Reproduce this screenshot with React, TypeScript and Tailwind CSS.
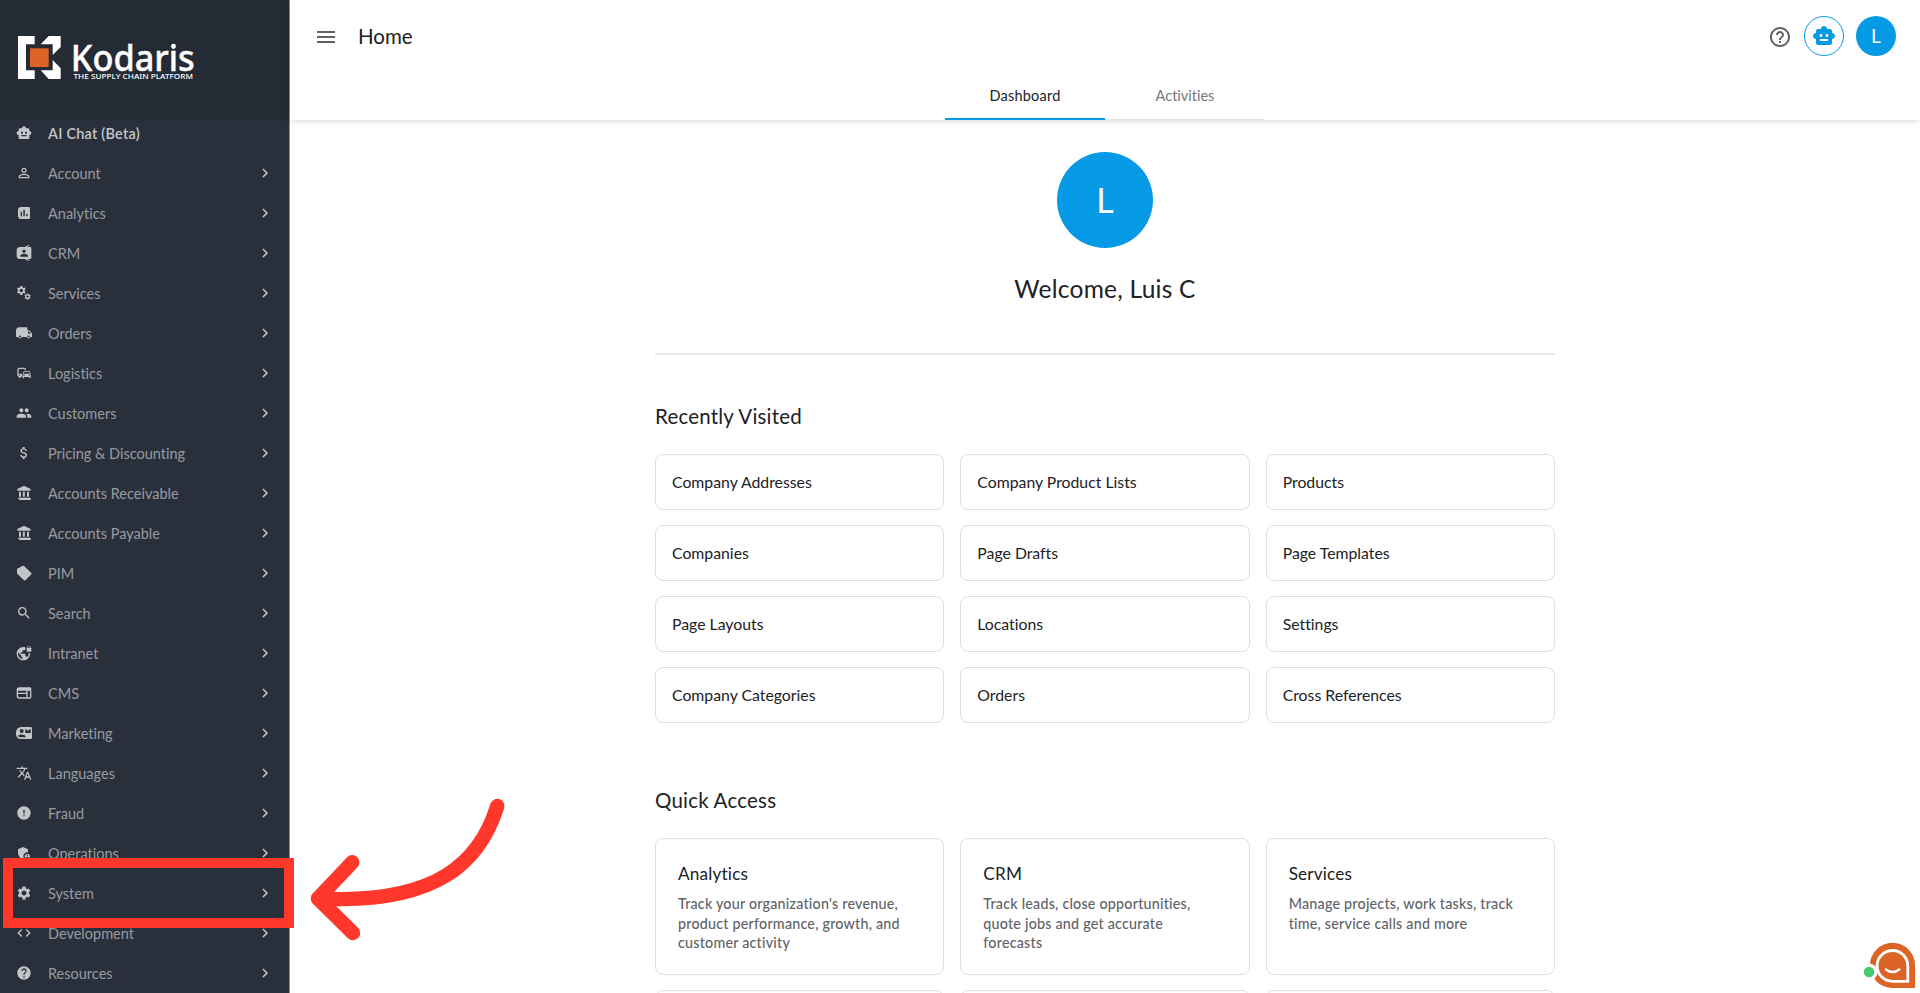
import type { ReactNode } from "react";
import {
  MdSmartToy,
  MdPersonOutline,
  MdCommute,
  MdGroup,
  MdAttachMoney,
  MdSearch,
  MdVpnLock,
  MdTranslate,
  MdError,
  MdAdminPanelSettings,
  MdSettings,
  MdCode,
  MdHelp,
  MdHelpOutline,
  MdChevronRight,
  MdMenu,
} from "react-icons/md";

type IconProps = { size?: number; className?: string };

function Glyph({ size = 16, className, children }: IconProps & { children: ReactNode }) {
  return (
    <svg width={size} height={size} viewBox="0 0 24 24" fill="currentColor" className={className}>
      {children}
    </svg>
  );
}

function ChartIcon(props: IconProps) {
  return (
    <Glyph {...props}>
      <path fillRule="evenodd" d="M8 3h11a2 2 0 0 1 2 2v14a2 2 0 0 1-2 2H8a5 5 0 0 1-5-5V8a5 5 0 0 1 5-5zM7 10v7h2v-7zM11 7v10h2.2V7zM15.4 13v4h2v-4z" />
    </Glyph>
  );
}

function ContactsIcon(props: IconProps) {
  return (
    <Glyph {...props}>
      <path fillRule="evenodd" d="M7 3h14a2 2 0 0 1 2 2v14a2 2 0 0 1-2 2H7a6 5 0 0 1-6-5V8a6 5 0 0 1 6-5zM12 6.7a2.6 2.6 0 1 0 0 5.2 2.6 2.6 0 0 0 0-5.2zM6.5 17.5h11.5V16c0-2-3.4-3-5.8-3s-5.7 1-5.7 3z" />
      <path d="M13 2.2L20 0v1.6l-4 1.4zM13 21.8l7 2.2v-1.6l-4-1.4z" />
    </Glyph>
  );
}

function GearsIcon({ size = 16, className }: IconProps) {
  return (
    <svg width={size} height={size} viewBox="0 0 16 16" className={className}>
      <MdSettings x={-0.2} y={0} size={11} />
      <MdSettings x={7.7} y={7.7} size={7.8} />
    </svg>
  );
}

function TruckIcon(props: IconProps) {
  return (
    <Glyph {...props}>
      <path fillRule="evenodd" d="M5 3.5h12V8h3l4 5v5h-2.3a3 3 0 0 1-5.8 0H8.6a3 3 0 0 1-5.8 0H0V9a5.5 5.5 0 0 1 5-5.5zM18 9.5V13h4l-2.7-3.5zM5.7 15.6a1.6 1.6 0 1 0 0 3.2 1.6 1.6 0 0 0 0-3.2zM18.8 15.6a1.6 1.6 0 1 0 0 3.2 1.6 1.6 0 0 0 0-3.2z" />
    </Glyph>
  );
}

function BankIcon(props: IconProps) {
  return (
    <Glyph {...props}>
      <path d="M12 1l10 5v2.5H2V6zM4.5 10h3v7.5h-3zM10.3 10h3v7.5h-3zM16.5 10h3v7.5h-3zM3 19h19v3.5H7A4.5 3.5 0 0 1 3 19z" />
    </Glyph>
  );
}

function TagIcon(props: IconProps) {
  return (
    <Glyph {...props}>
      <path d="M1.5 6.5A3.5 3.5 0 0 1 5 4l4-2.5a3 3 0 0 1 3.5.5l10 9.5a2 2 0 0 1 0 3l-8 8a2 2 0 0 1-3 0L2.3 13.5a3 3 0 0 1-.8-2z" />
    </Glyph>
  );
}

function LayoutIcon(props: IconProps) {
  return (
    <Glyph {...props}>
      <path fillRule="evenodd" d="M5 3.5h16a2 2 0 0 1 2 2v13a2 2 0 0 1-2 2H5a4 4 0 0 1-4-4v-9a4 4 0 0 1 4-4zM3 8.5v3.2h12.5V8.5zM3 13.5V16a2.5 2.5 0 0 0 2.5 2.5h10v-5zM17.5 8.5v10H21v-10z" />
    </Glyph>
  );
}

function ContactMailIcon(props: IconProps) {
  return (
    <Glyph {...props}>
      <path fillRule="evenodd" d="M8 3h14a2 2 0 0 1 2 2v14a2 2 0 0 1-2 2H7a7 7 0 0 1-7-7v-3a8 8 0 0 1 8-8zM8.5 6a3 3 0 1 0 0 6 3 3 0 0 0 0-6zM2.5 16.5c1 1.2 2.5 1.7 4.5 1.7h7.5v-1c0-2-4-3.1-6-3.1s-5 .9-6 2.4zM14 5.5V12h8V5.5l-4 3z" />
      <path d="M15.5 5.5h5L18 7.3z" />
    </Glyph>
  );
}

const menu = [
  { label: "Account", icon: MdPersonOutline },
  { label: "Analytics", icon: ChartIcon },
  { label: "CRM", icon: ContactsIcon },
  { label: "Services", icon: GearsIcon },
  { label: "Orders", icon: TruckIcon },
  { label: "Logistics", icon: MdCommute },
  { label: "Customers", icon: MdGroup },
  { label: "Pricing & Discounting", icon: MdAttachMoney },
  { label: "Accounts Receivable", icon: BankIcon },
  { label: "Accounts Payable", icon: BankIcon },
  { label: "PIM", icon: TagIcon },
  { label: "Search", icon: MdSearch },
  { label: "Intranet", icon: MdVpnLock },
  { label: "CMS", icon: LayoutIcon },
  { label: "Marketing", icon: ContactMailIcon },
  { label: "Languages", icon: MdTranslate },
  { label: "Fraud", icon: MdError },
  { label: "Operations", icon: MdAdminPanelSettings },
  { label: "System", icon: MdSettings },
  { label: "Development", icon: MdCode },
  { label: "Resources", icon: MdHelp },
];

const recent = [
  "Company Addresses",
  "Company Product Lists",
  "Products",
  "Companies",
  "Page Drafts",
  "Page Templates",
  "Page Layouts",
  "Locations",
  "Settings",
  "Company Categories",
  "Orders",
  "Cross References",
];

const quick = [
  { title: "Analytics", lines: ["Track your organization's revenue,", "product performance, growth, and", "customer activity"] },
  { title: "CRM", lines: ["Track leads, close opportunities,", "quote jobs and get accurate", "forecasts"] },
  { title: "Services", lines: ["Manage projects, work tasks, track", "time, service calls and more"] },
];

function Logo() {
  return (
    <svg width="190" height="70" viewBox="17 25 190 70">
      <path fill="#fff" d="M18 36h16.7v8.3H26v26h8.7V79H18z" />
      <path fill="#fff" d="M48.7 36H60.7V47l-8 8V44.3H40.7zM52.7 60l8 8.3V79h-12l-8-8.7h12z" />
      <path fill="#dc6427" d="M30 48.3h18.7v18.7H30z" />
      <text x="70.8" y="70.5" textLength="124" lengthAdjust="spacingAndGlyphs" fontSize="35.5" fontWeight="500" fill="#fff" stroke="#fff" strokeWidth="0.4" fontFamily="Noto Sans, sans-serif">
        Kodaris
      </text>
      <text x="73.5" y="78.7" textLength="119.5" lengthAdjust="spacingAndGlyphs" fontSize="7.6" fontWeight="500" fill="#fff" fontFamily="Noto Sans, sans-serif">
        THE SUPPLY CHAIN PLATFORM
      </text>
    </svg>
  );
}

function Sidebar() {
  return (
    <aside className="flex h-full w-[290px] shrink-0 flex-col border-r border-[#8d9095] bg-[#2a303b]">
      <div className="z-10 flex h-[120px] shrink-0 items-start bg-[#252b35] pl-[17px] pt-[25px]">
        <Logo />
      </div>
      <nav className="-mt-[7px] flex flex-col">
        <div className="flex h-10 items-center pl-4 text-[#c3c6ca]">
          <MdSmartToy size={16} />
          <span className="ml-4 pt-0.5 text-[14.5px] leading-5 font-semibold tracking-[0.015em]">AI Chat (Beta)</span>
        </div>
        {menu.map(({ label, icon: Icon }) => (
          <div key={label} className="flex h-10 items-center pl-4 pr-[15px] text-[#c3c5c8]">
            <Icon size={16} className="shrink-0" />
            <span className="ml-4 flex-1 pt-0.5 text-[14.5px] leading-5 text-[#979ba1]">{label}</span>
            <MdChevronRight size={18} />
          </div>
        ))}
      </nav>
    </aside>
  );
}

function Header() {
  return (
    <header className="z-10 flex h-[120px] shrink-0 flex-col bg-white shadow-[0_1px_6px_rgba(0,0,0,0.16)]">
      <div className="flex h-[74px] items-center pl-6 pr-6">
        <MdMenu size={24} className="text-[#5f6368]" />
        <h1 className="ml-5 pb-0.5 text-[20.5px] text-[#202124]">Home</h1>
        <div className="ml-auto flex items-center">
          <MdHelpOutline size={24} className="text-[#5f6368]" />
          <div className="mb-0.5 ml-3 flex size-10 items-center justify-center rounded-full border border-[#069ae6] text-[#069ae6]">
            <MdSmartToy size={24} />
          </div>
          <div className="mb-0.5 ml-3 flex size-10 items-center justify-center rounded-full bg-[#069ae6] text-[19px] leading-6 text-white">L</div>
        </div>
      </div>
      <div className="flex h-[46px] justify-center">
        <div className="flex w-40 items-center justify-center border-b-2 border-[#069ae6] text-[14.5px] leading-5 tracking-[0.015em] text-[#202124]">Dashboard</div>
        <div className="flex w-40 items-center justify-center border-b border-[#e4e4e4] pb-px text-[14.5px] leading-5 text-[#76787b]">Activities</div>
      </div>
    </header>
  );
}

function Content() {
  return (
    <main className="flex min-h-0 flex-1 flex-col items-center overflow-hidden">
      <div className="flex w-[900px] flex-col">
        <div className="mt-8 flex size-24 items-center justify-center self-center rounded-full bg-[#069ae6] pb-0.5 text-[34px] text-white">L</div>
        <h2 className="mt-[25px] self-center text-[24.5px] leading-8 tracking-[0.01em] text-[#202124]">Welcome, Luis C</h2>
        <div className="mt-12 h-[2px] bg-[#ebebeb]" />

        <h3 className="mt-[47px] text-[20.5px] leading-7 tracking-[0.01em] text-[#202124]">Recently Visited</h3>
        <div className="mt-6 grid grid-cols-3 gap-x-4 gap-y-[15px]">
          {recent.map((name) => (
            <div key={name} className="flex h-14 items-center rounded-lg border border-[#dfdfe2] pl-4 text-[15.8px] text-[#202124]">
              {name}
            </div>
          ))}
        </div>

        <h3 className="mt-[63px] text-[20.5px] leading-7 tracking-[0.01em] text-[#202124]">Quick Access</h3>
        <div className="mt-6 grid grid-cols-3 gap-x-4 gap-y-[15px]">
          {quick.map((card) => (
            <div key={card.title} className="h-[137px] rounded-lg border border-[#dfdfe2] pl-[22px] pt-[23px]">
              <h4 className="text-[17.2px] leading-6 tracking-[0.01em] text-[#202124]">{card.title}</h4>
              <div className="mt-2 text-[14.3px] font-medium leading-[19.6px] tracking-[0.015em] text-[#5f6368]">
                {card.lines.map((line) => (
                  <p key={line}>{line}</p>
                ))}
              </div>
            </div>
          ))}
          {[0, 1, 2].map((n) => (
            <div key={n} className="h-[137px] rounded-lg border border-[#dfdfe2]" />
          ))}
        </div>
      </div>
    </main>
  );
}

export default function App() {
  return (
    <div className="relative flex h-[993px] w-[1920px] overflow-hidden bg-white [font-family:Lato,'Noto_Sans',sans-serif] [font-variant-ligatures:none]">
      <Sidebar />
      <div className="flex min-w-0 flex-1 flex-col">
        <Header />
        <Content />
      </div>

      {/* highlight and arrow over the System entry */}
      <div className="absolute left-[3px] top-[858px] z-20 h-[70px] w-[291px] border-10 border-[#ff382b]" />
      <svg className="absolute left-[300px] top-[790px] z-20" width="220" height="160" viewBox="300 790 220 160" fill="none" stroke="#ff382b" strokeWidth="14.4" strokeLinecap="round" strokeLinejoin="round">
        <path d="M497.3 806C480 862 437 905 318 898.5" />
        <path d="M352.3 862.3L318 898.5L353 933" />
      </svg>

      {/* chat launcher */}
      <svg className="absolute left-[1855px] top-[935px] z-20" width="65" height="58" viewBox="1855 935 65 58" fill="none">
        <path fill="#dc6427" d="M1892.5 942.8a22.6 22.6 0 0 1 22.6 22.6v22.6h-22.6a22.6 22.6 0 0 1 0-45.2z" />
        <path stroke="#fff" strokeWidth="2.8" d="M1892.5 950.5a15.3 15.3 0 0 1 15.3 15.3v15.5h-15.3a15.4 15.4 0 0 1 0-30.8z" />
        <path stroke="#fff" strokeWidth="2.6" strokeLinecap="round" d="M1886 969.5q6.6 5 13.2 0" />
        <circle cx="1869" cy="972" r="8.6" fill="#fff" />
        <circle cx="1869" cy="972" r="5.2" fill="#47cb6b" />
      </svg>
    </div>
  );
}
